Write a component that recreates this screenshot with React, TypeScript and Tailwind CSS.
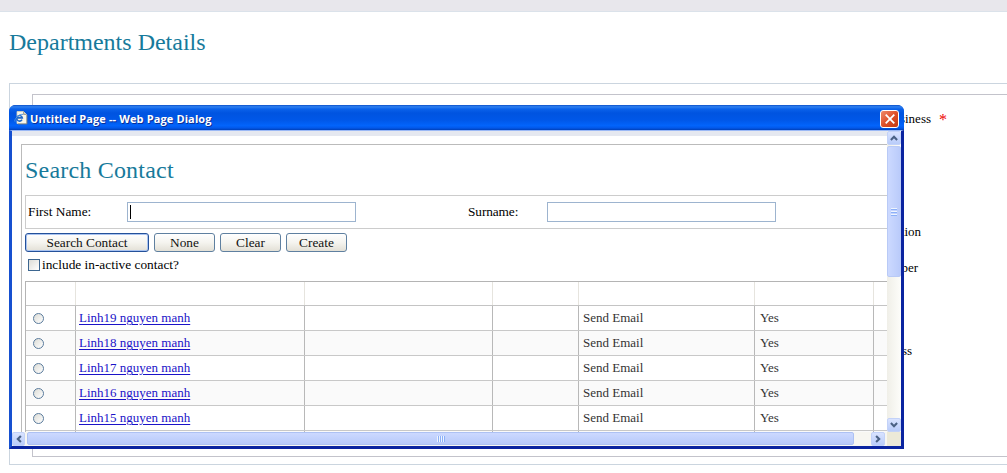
import React from "react";

const contacts = [
  "Linh19 nguyen manh",
  "Linh18 nguyen manh",
  "Linh17 nguyen manh",
  "Linh16 nguyen manh",
  "Linh15 nguyen manh",
  "",
];

const columns = "grid shrink-0 grid-cols-[49px_230px_188px_86px_176px_119px_13px]";

function Chevron({ className }: { className: string }) {
  return (
    <svg viewBox="0 0 8 6" className={className} fill="none" stroke="#4a6184" strokeWidth="2.1">
      <path d="M0.9 4.9 4 1.8l3.1 3.1" />
    </svg>
  );
}

function ArrowButton({ rotation, size }: { rotation: string; size: string }) {
  return (
    <div className={`flex shrink-0 items-center justify-center rounded-[2px] border border-[#c3d2f8] bg-linear-to-b from-[#d9e3ff] to-[#b9ccfa] ${size}`}>
      <Chevron className={`h-[6px] w-[8px] ${rotation}`} />
    </div>
  );
}

function PageIcon() {
  return (
    <svg viewBox="0 0 14 14" className="h-[14px] w-[14px] shrink-0">
      <path d="M3 0.5h6.500l3 3v9H3z" fill="#f8f6ea" stroke="#d8d4bc" strokeWidth="0.8" />
      <path d="M9.500 0.500v3h3" fill="#cfcbb8" stroke="#8b8a86" strokeWidth="0.7" />
      <path d="M4 13h9V4" fill="none" stroke="#7d7c78" strokeWidth="0.8" />
      <path d="M8 8.7A2.800 2.800 0 1 1 8.300 6.900H3.200" fill="none" stroke="#2269c9" strokeWidth="1.6" />
      <path d="M1 10.600C-.2 8.500 4.500 3 9 3.300" fill="none" stroke="#4a93e4" strokeWidth="1" />
    </svg>
  );
}

function PushButton({ label, width, focused }: { label: string; width: string; focused?: boolean }) {
  return (
    <button
      className={`flex h-[19px] items-center justify-center rounded-[3px] border bg-linear-to-b from-white via-[#f5f4ef] to-[#e3e0d6] text-[13.33px] leading-[17px] text-[#111] ${width} ${
        focused ? "border-[#24519a] shadow-[inset_0_0_0_1px_#a9c3f0]" : "border-[#5f80a0]"
      }`}
    >
      {label}
    </button>
  );
}

function TextField({ caret }: { caret?: boolean }) {
  return (
    <div className="flex h-[20px] w-[229px] shrink-0 border border-[#9db4cf] bg-white pt-[2px] pl-[2px]">
      {caret && <div className="h-[14px] w-px bg-black" />}
    </div>
  );
}

function TitleBar() {
  return (
    <div className="flex h-[25px] shrink-0 items-center rounded-t-[6px] bg-[linear-gradient(to_bottom,#0a4fc8_0%,#2f80f0_7%,#0a62ea_16%,#0054e0_32%,#0057e8_60%,#0264fb_82%,#0258ea_92%,#0040b8_100%)] pr-[5px] pl-[5px]">
      <PageIcon />
      <span className="ml-[2px] pt-[3px] font-['Open_Sans','Noto_Sans',sans-serif] text-[11px] leading-[16px] font-bold tracking-[0.12px] whitespace-nowrap text-white [text-shadow:1px_1px_0_#0a2f96]">
        Untitled Page -- Web Page Dialog
      </span>
      <div className="mt-[3px] ml-auto flex h-[18px] w-[19px] items-center justify-center rounded-[3px] border border-white bg-linear-to-br from-[#ee8a6a] via-[#df4f28] to-[#c23a12]">
        <svg viewBox="0 0 10 10" className="h-[10px] w-[10px]" stroke="white" strokeWidth="1.8">
          <path d="M0.700 0.700 9.300 9.300M9.300 0.700 0.700 9.300" />
        </svg>
      </div>
    </div>
  );
}

function ContactTable() {
  return (
    <div className="flex flex-col border-t border-l border-[#b4b4b4] text-[13px] leading-[24px] text-[#333]">
      <div className={`${columns} h-[24px] border-b border-[#c4c4c4]`}>
        {[0, 1, 2, 3, 4, 5].map((i) => (
          <div key={i} className="border-r border-[#e6e4de] first:w-[50px]" />
        ))}
      </div>
      {contacts.map((name, i) => (
        <div key={i} className={`${columns} h-[25px] border-b border-[#c8c8c8] ${i % 2 ? "bg-[#fafafa]" : "bg-white"}`}>
          <div className="w-[50px] border-r border-[#b8b8b8] pt-[7px] pl-[7px]">
            {name && (
              <div className="h-[11px] w-[11px] rounded-full border border-[#5a7b9c] bg-linear-to-br from-[#dcdcd6] to-white" />
            )}
          </div>
          <div className="border-r border-[#b8b8b8] pl-[4px] whitespace-nowrap">
            {name && <a className="text-[#1a12c8] underline underline-offset-2">{name}</a>}
          </div>
          <div className="border-r border-[#b8b8b8]" />
          <div className="border-r border-[#b8b8b8]" />
          <div className="border-r border-[#b8b8b8] pl-[4px]">{name && "Send Email"}</div>
          <div className="border-r border-[#b8b8b8] pl-[5px]">{name && "Yes"}</div>
        </div>
      ))}
    </div>
  );
}

function DialogContent() {
  return (
    <div className="flex h-[301px] w-[875px] flex-col overflow-hidden bg-white">
      <div className="h-[5px] shrink-0 bg-[#e5e8f0]" />
      <div className="mt-[8px] ml-[9px] flex h-[320px] shrink-0 flex-col border-t border-l border-[#bbb] pl-[3px]">
        <h2 className="mt-[10px] h-[40px] shrink-0 text-[24px] leading-[30px] tracking-[0.2px] text-[#177a9b]">Search Contact</h2>
        <div className="flex h-[34px] shrink-0 items-center border-y border-l border-[#ccc] pl-[2px] text-[13.33px] text-black">
          <span className="w-[99px]">First Name:</span>
          <TextField caret />
          <span className="ml-[112px] w-[79px] tracking-[-0.1px]">Surname:</span>
          <TextField />
        </div>
        <div className="mt-[4px] flex shrink-0 gap-[5px]">
          <PushButton label="Search Contact" width="w-[124px]" focused />
          <PushButton label="None" width="w-[61px]" />
          <PushButton label="Clear" width="w-[61px]" />
          <PushButton label="Create" width="w-[61px]" />
        </div>
        <div className="flex h-[29px] shrink-0 items-center gap-[2px] pb-[3px] pl-[3px] text-[13.33px] text-black">
          <div className="h-[12px] w-[12px] border border-[#3d6690] bg-linear-to-br from-[#dcdcd7] to-white" />
          <span>include in-active contact?</span>
        </div>
        <ContactTable />
      </div>
    </div>
  );
}

function VerticalScrollbar() {
  return (
    <div className="flex h-[301px] w-[14px] flex-col bg-linear-to-r from-[#f0efe8] to-[#fdfdfa]">
      <ArrowButton rotation="" size="h-[14px] w-[14px]" />
      <div className="mt-px flex h-[131px] flex-col items-center justify-center gap-px rounded-[2px] border border-[#b9caf6] bg-linear-to-r from-[#ccd9ff] to-[#bacbfa]">
        {[0, 1, 2].map((i) => (
          <div key={i} className="h-[2px] w-[6px] border-t border-[#eef4fe] bg-[#8cb0f8]" />
        ))}
      </div>
      <div className="mt-auto flex">
        <ArrowButton rotation="rotate-180" size="h-[14px] w-[14px]" />
      </div>
    </div>
  );
}

function HorizontalScrollbar() {
  return (
    <div className="flex h-[14px] w-[889px] bg-[#f7f6f1]">
      <ArrowButton rotation="-rotate-90" size="h-[14px] w-[13px]" />
      <div className="ml-[2px] flex h-[13px] w-[827px] items-center justify-center rounded-[2px] border border-[#adc1f3] bg-linear-to-b from-[#ccd9ff] to-[#b7c9fa]">
        {[0, 1, 2, 3].map((i) => (
          <div key={i} className="h-[6px] w-[2px] border-l border-[#eef4fe] bg-[#8cb0f8]" />
        ))}
      </div>
      <div className="mr-[2px] ml-auto flex">
        <ArrowButton rotation="rotate-90" size="h-[14px] w-[14px]" />
      </div>
      <div className="w-[14px] bg-[#ece9d8]" />
    </div>
  );
}

function Dialog() {
  return (
    <div className="absolute top-[105px] left-[9px] flex h-[344px] w-[895px] flex-col rounded-t-[7px] bg-[#0a2fae]">
      <TitleBar />
      <div className="flex h-[319px] flex-col border-x-[3px] border-t border-b-[3px] border-t-[#9ab8f5] border-r-[#0a24a0] border-b-[#0a24a0] border-l-[#1650d0]">
        <div className="flex">
          <DialogContent />
          <VerticalScrollbar />
        </div>
        <HorizontalScrollbar />
      </div>
    </div>
  );
}

export default function App() {
  return (
    <div className="relative flex h-[473px] w-[1007px] flex-col overflow-hidden bg-white font-['Liberation_Serif',serif]">
      <div className="h-[12px] shrink-0 border-b border-[#dbe2ea] bg-[#e8e7ec]" />
      <h1 className="mt-[15px] ml-[9px] h-[56px] shrink-0 text-[24px] leading-[30px] text-[#177a9b]">Departments Details</h1>
      <div className="ml-[9px] h-[382px] shrink-0 border-y border-l border-[#cbd5df] pt-[10px] pl-[22px]">
        <div className="flex h-[363px] flex-col border-y border-l border-[#c3c3cb] text-[13px] leading-[16px] text-black">
          <div className="mt-[15px] flex h-[20px] w-[914px] justify-end gap-[8px]">
            <span className="pt-px">siness</span>
            <span className="w-[8px] text-[16px] leading-[20px] text-[#e00]">*</span>
          </div>
          <div className="mt-[94px] w-[888px] text-right">tion</div>
          <div className="mt-[20px] w-[885px] text-right">ber</div>
          <div className="mt-[67px] w-[879px] text-right">ss</div>
        </div>
      </div>
      <Dialog />
    </div>
  );
}
